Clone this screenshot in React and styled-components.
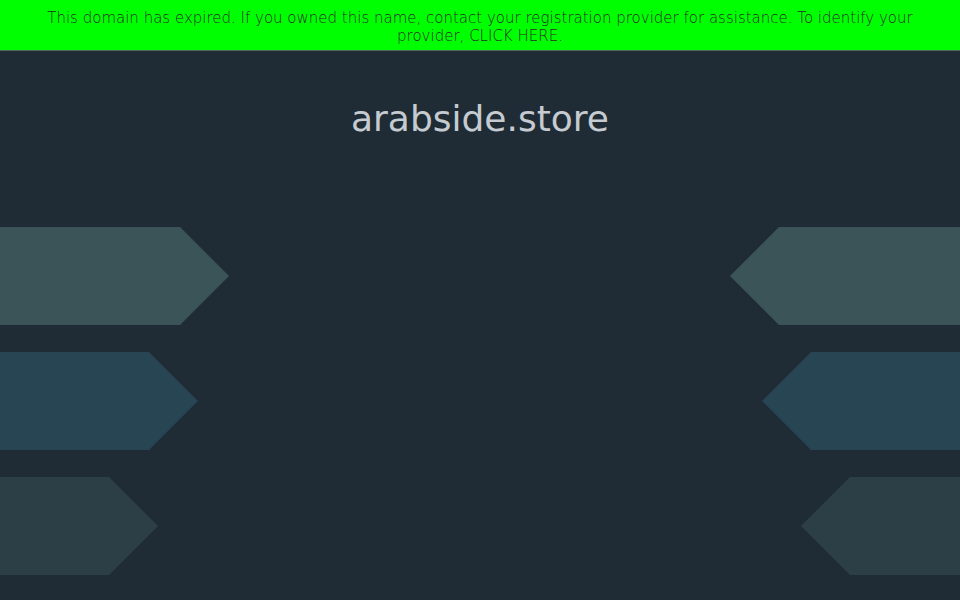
import React from "react";
import styled, { createGlobalStyle } from "styled-components";

const Global = createGlobalStyle`
  html, body { margin: 0; padding: 0; background: #1f2b35; }
  body { font-family: "DejaVu Sans", Verdana, sans-serif; }
`;

const Page = styled.div`
  width: 960px;
  height: 600px;
  background: #1f2b35;
  display: flex;
  flex-direction: column;
  overflow: hidden;
`;

const Banner = styled.div`
  background: #00ff00;
  color: #2a2a2a;
  font-size: 15px;
  font-weight: 200;
  line-height: 18px;
  text-align: center;
  padding: 9px 40px 5px;
  height: 51px;
  box-sizing: border-box;
  border-bottom: 1px solid #55685e;
`;

const Link = styled.a`
  color: inherit;
  text-decoration: none;
`;

const Title = styled.h1`
  margin: 46px 0 0;
  font-weight: normal;
  font-size: 36px;
  line-height: 44px;
  text-align: center;
  color: #c5cbd0;
`;

const Stage = styled.div`
  margin-top: 86px;
  display: flex;
  justify-content: space-between;
`;

const Column = styled.div`
  display: flex;
  flex-direction: column;
  align-items: ${(p) => (p.$side === "left" ? "flex-start" : "flex-end")};
  gap: 27px;
`;

const Arrow = styled.div`
  height: 98px;
  width: ${(p) => p.$w}px;
  background: ${(p) => p.$color};
  clip-path: ${(p) =>
    p.$side === "left"
      ? "polygon(0 0, calc(100% - 49px) 0, 100% 50%, calc(100% - 49px) 100%, 0 100%)"
      : "polygon(49px 0, 100% 0, 100% 100%, 49px 100%, 0 50%)"};
`;

const shapes = [
  { color: "#3b5458", l: 229, r: 230 },
  { color: "#274552", l: 198, r: 198 },
  { color: "#2c3e46", l: 158, r: 159 },
];

export default function App() {
  return (
    <>
      <Global />
      <Page>
        <Banner>
          This domain has expired. If you owned this name, contact your registration provider for
          assistance. To identify your provider, <Link href="#">CLICK HERE</Link>.
        </Banner>
        <Title>arabside.store</Title>
        <Stage>
          <Column $side="left">
            {shapes.map((s, i) => (
              <Arrow key={i} $side="left" $w={s.l} $color={s.color} />
            ))}
          </Column>
          <Column $side="right">
            {shapes.map((s, i) => (
              <Arrow key={i} $side="right" $w={s.r} $color={s.color} />
            ))}
          </Column>
        </Stage>
      </Page>
    </>
  );
}
